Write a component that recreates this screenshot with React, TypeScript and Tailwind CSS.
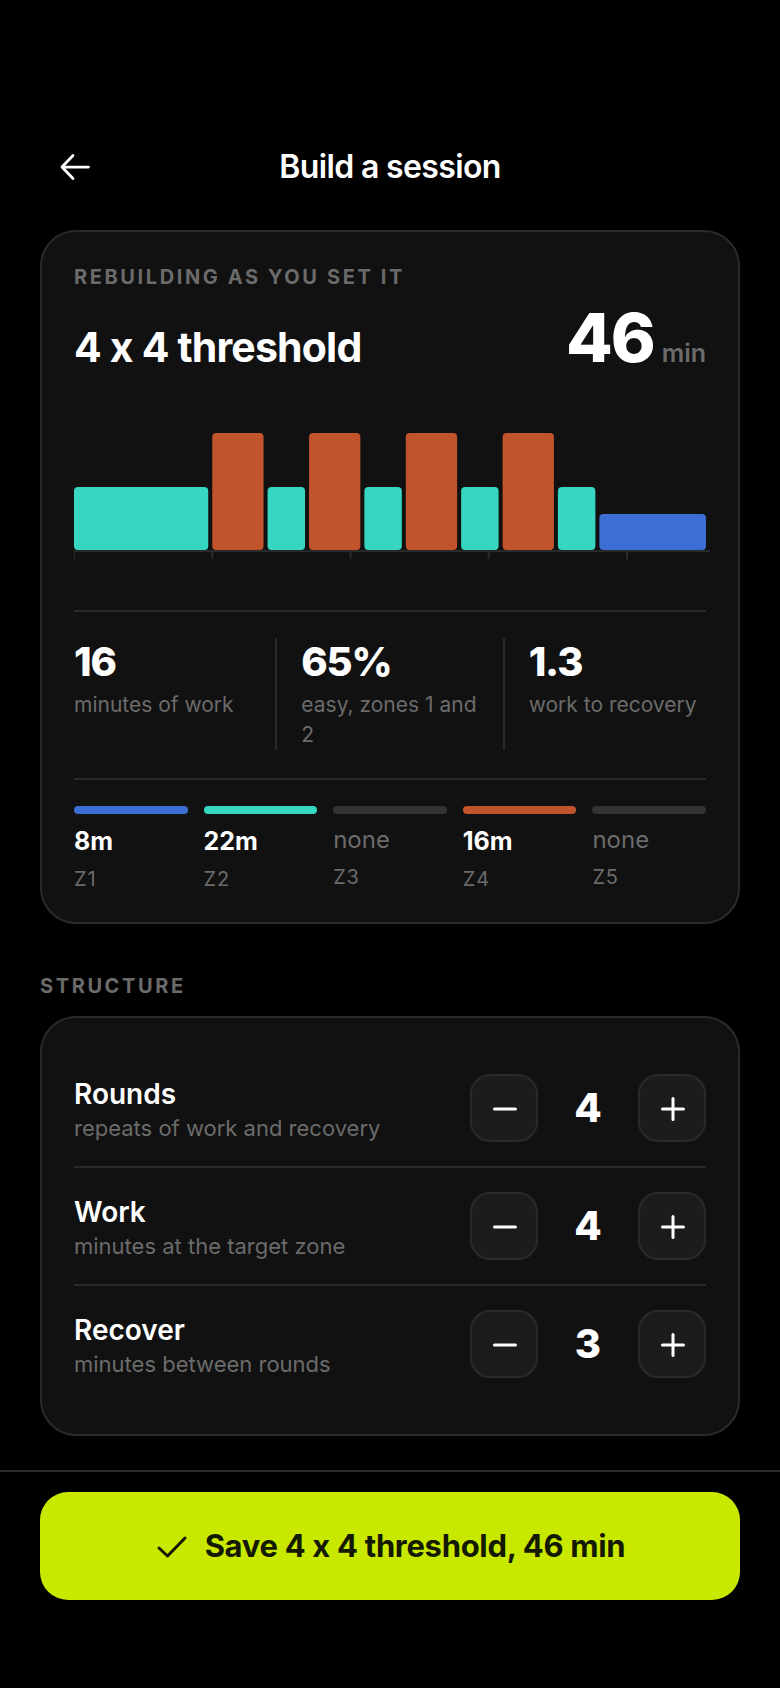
import { useState } from 'react';

type ZoneId = 1 | 2 | 4;

interface Segment {
  zone: ZoneId;
  minutes: number;
}

interface StepperRowProps {
  label: string;
  hint: string;
  value: number;
  onChange: (value: number) => void;
}

const WARM_UP = 10;
const COOL_DOWN = 8;

const zoneFill: Record<ZoneId, string> = {
  1: '#3b6fd4',
  2: '#36d6c1',
  4: '#c2542d',
};

const zoneHeight: Record<ZoneId, number> = { 1: 36, 2: 63, 4: 117 };

const zoneBar = ['bg-[#3b6fd4]', 'bg-[#36d6c1]', 'bg-[#333333]', 'bg-[#c2542d]', 'bg-[#333333]'];

function SessionChart({ segments }: { segments: Segment[] }) {
  const total = segments.reduce((sum, s) => sum + s.minutes, 0);
  const unit = 636 / total;
  const ticks = Array.from({ length: Math.ceil(total / 10) }, (_, i) => i * 10);
  let elapsed = 0;

  return (
    <svg viewBox="0 0 632 126" className="block w-full overflow-visible" aria-hidden="true">
      <path d="M0 118H636" stroke="#2a2a2a" strokeWidth="2" />
      {ticks.map((t) => (
        <path key={t} d={`M${Math.max(t * unit, 0.5)} 118v8`} stroke="#2a2a2a" strokeWidth={t === 0 ? 1 : 2} />
      ))}
      {segments.map((s, i) => {
        const x = elapsed * unit;
        elapsed += s.minutes;
        return (
          <rect
            key={i}
            x={x}
            y={117 - zoneHeight[s.zone]}
            width={s.minutes * unit - 4}
            height={zoneHeight[s.zone]}
            rx="4"
            fill={zoneFill[s.zone]}
          />
        );
      })}
    </svg>
  );
}

function StepperRow({ label, hint, value, onChange }: StepperRowProps) {
  const buttonClass =
    'flex size-[68px] items-center justify-center rounded-[20px] border-2 border-[#2a2a2a] bg-[#1c1c1c]';

  return (
    <div className="flex items-center justify-between border-b-2 border-[#2a2a2a] py-6 last:border-b-0">
      <div>
        <h3 className="text-[28px] leading-10 font-semibold">{label}</h3>
        <p className="text-[22px] leading-7 text-[#6b6b6b]">{hint}</p>
      </div>
      <div className="flex items-center">
        <button type="button" aria-label={`Decrease ${label}`} className={buttonClass} onClick={() => onChange(Math.max(1, value - 1))}>
          <svg viewBox="0 0 36 36" className="size-9" fill="none" stroke="currentColor" strokeWidth="3" strokeLinecap="round">
            <path d="M8.500 19h21" />
          </svg>
        </button>
        <output className="w-[100px] text-center text-[40px] leading-12 font-extrabold">{value}</output>
        <button type="button" aria-label={`Increase ${label}`} className={buttonClass} onClick={() => onChange(value + 1)}>
          <svg viewBox="0 0 36 36" className="size-9" fill="none" stroke="currentColor" strokeWidth="3" strokeLinecap="round">
            <path d="M8.500 19h21M19 8.500v21" />
          </svg>
        </button>
      </div>
    </div>
  );
}

export default function App() {
  const [rounds, setRounds] = useState(4);
  const [work, setWork] = useState(4);
  const [recover, setRecover] = useState(3);

  const segments: Segment[] = [{ zone: 2, minutes: WARM_UP }];
  for (let i = 0; i < rounds; i++) {
    segments.push({ zone: 4, minutes: work }, { zone: 2, minutes: recover });
  }
  segments.push({ zone: 1, minutes: COOL_DOWN });

  const hard = rounds * work;
  const easy = WARM_UP + COOL_DOWN + rounds * recover;
  const total = hard + easy;
  const name = `${rounds} x ${work} threshold`;

  const stats = [
    { value: `${hard}`, label: 'minutes of work' },
    { value: `${Math.round((easy / total) * 100)}%`, label: 'easy, zones 1 and 2' },
    { value: (work / recover).toFixed(1), label: 'work to recovery' },
  ];
  const zones = [COOL_DOWN, WARM_UP + rounds * recover, 0, hard, 0];

  return (
    <div className="flex min-h-screen flex-col bg-black font-['Inter',sans-serif] text-white">
      <header className="grid grid-cols-[72px_1fr_72px] items-center px-10 pt-[131px] pb-[27px]">
        <button type="button" aria-label="Back" className="flex size-[72px] items-center justify-center">
          <svg viewBox="0 0 36 36" className="size-9" fill="none" stroke="currentColor" strokeWidth="2.750" strokeLinecap="round" strokeLinejoin="round">
            <path d="M30.500 18H4M15 6.500L4 18L15 29.500" />
          </svg>
        </button>
        <h1 className="text-center text-[32px] leading-10 font-semibold tracking-[-0.02em]">Build a session</h1>
      </header>

      <main className="flex flex-1 flex-col px-10 pb-[34px]">
        <section className="rounded-[36px] border-2 border-[#2a2a2a] bg-[#111111] p-8">
          <p className="text-[20px] leading-[26px] font-bold tracking-[0.13em] text-[#6b6b6b]">REBUILDING AS YOU SET IT</p>
          <div className="mt-[11px] flex items-baseline justify-between">
            <h2 className="text-[41px] leading-12 font-bold tracking-[-0.02em]">{name}</h2>
            <p className="text-[68px] leading-[72px] font-extrabold tracking-[-0.03em]">
              {total}
              <span className="ml-2 text-[25px] leading-none font-semibold tracking-normal text-[#6b6b6b]">min</span>
            </p>
          </div>

          <div className="mt-[60px] mb-[51px]">
            <SessionChart segments={segments} />
          </div>

          <div className="flex border-y-2 border-[#2a2a2a] pt-[26px] pb-7">
            {stats.map((stat) => (
              <div key={stat.label} className="flex-1 border-[#2a2a2a] not-first:border-l-2 not-first:pl-6 not-last:pr-6">
                <p className="text-[40px] leading-12 font-extrabold tracking-[-0.03em]">{stat.value}</p>
                <p className="mt-1 text-[21px] leading-[30px] text-[#6b6b6b]">{stat.label}</p>
              </div>
            ))}
          </div>

          <div className="mt-[26px] grid grid-cols-5 gap-4">
            {zones.map((minutes, i) => (
              <div key={i} className="flex flex-col gap-2.5">
                <div className={`h-2 rounded-full ${zoneBar[i]}`} />
                {minutes > 0 ? (
                  <p className="text-[25px] leading-[34px] font-bold">{minutes}m</p>
                ) : (
                  <p className="text-[24px] leading-8 text-[#6b6b6b]">none</p>
                )}
                <p className="text-[20px] leading-[22px] tracking-[0.04em] text-[#6b6b6b]">Z{i + 1}</p>
              </div>
            ))}
          </div>
        </section>

        <h2 className="mt-12 mb-4 text-[20px] leading-7 font-bold tracking-[0.13em] text-[#6b6b6b]">STRUCTURE</h2>
        <section className="rounded-[36px] border-2 border-[#2a2a2a] bg-[#111111] p-8">
          <StepperRow label="Rounds" hint="repeats of work and recovery" value={rounds} onChange={setRounds} />
          <StepperRow label="Work" hint="minutes at the target zone" value={work} onChange={setWork} />
          <StepperRow label="Recover" hint="minutes between rounds" value={recover} onChange={setRecover} />
        </section>
      </main>

      <footer className="border-t-2 border-[#2a2a2a] px-10 pt-5 pb-[88px]">
        <button type="button" className="flex h-[108px] w-full items-center justify-center gap-4 rounded-[28px] bg-[#c8e800] text-[#141a00]">
          <svg viewBox="0 0 34 34" className="size-[34px]" fill="none" stroke="currentColor" strokeWidth="3" strokeLinecap="round" strokeLinejoin="round">
            <path d="M4 19L12.500 27L30 9" />
          </svg>
          <span className="text-[31px] leading-10 font-bold tracking-[-0.01em]">
            Save {name}, {total} min
          </span>
        </button>
      </footer>
    </div>
  );
}
